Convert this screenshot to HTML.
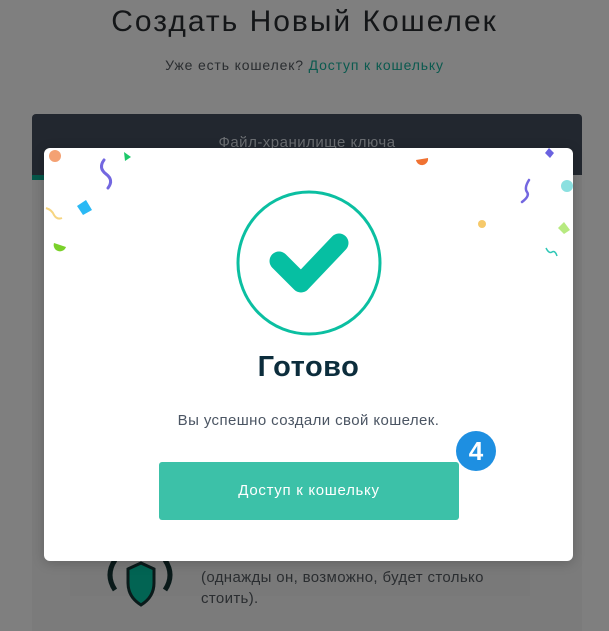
<!DOCTYPE html>
<html><head><meta charset="utf-8"><style>
*{margin:0;padding:0;box-sizing:border-box}
body{width:609px;height:631px;overflow:hidden;background:#7f7f7f;font-family:"Liberation Sans",sans-serif;position:relative}
.abs{position:absolute}
</style></head><body>
<div class="abs" style="left:32px;top:175px;width:550px;height:456px;background:#7b7b7b"></div>
<div class="abs" style="left:70px;top:200px;width:460px;height:396px;background:#797979"></div>
<div class="abs" style="left:0;top:5px;width:609px;text-align:center;font-size:30px;letter-spacing:2px;color:#141618">Создать Новый Кошелек</div>
<div class="abs" style="left:0;top:57px;width:609px;text-align:center;font-size:14px;letter-spacing:0.85px;color:#2a2d30">Уже есть кошелек? <span style="color:#0b5a4f">Доступ к кошельку</span></div>
<div class="abs" style="left:32px;top:114px;width:550px;height:61px;background:#22272f;border-radius:4px 4px 0 0"></div>
<div class="abs" style="left:32px;top:175px;width:200px;height:5px;background:#06574a"></div>
<div class="abs" style="left:32px;top:134px;width:550px;text-align:center;font-size:15px;letter-spacing:0.5px;color:#6b6e72">Файл-хранилище ключа</div>
<svg class="abs" style="left:95px;top:555px" width="90" height="70" viewBox="0 0 90 70">
<path d="M20 5 Q10 20 20 35" stroke="#0a1a1a" stroke-width="5" fill="none"/>
<path d="M70 5 Q80 20 70 35" stroke="#0a1a1a" stroke-width="5" fill="none"/>
<path d="M46 8 L33 14 L33 28 Q33 42 46 50 Q59 42 59 28 L59 14 Z" fill="#026453" stroke="#0a1a1a" stroke-width="3"/>
</svg>
<div class="abs" style="left:201px;top:567px;font-size:15px;line-height:21px;letter-spacing:0.35px;color:#2a2d30;width:310px">(однажды он, возможно, будет столько стоить).</div>

<div class="abs" style="left:44px;top:148px;width:529px;height:413px;background:#fff;border-radius:6px;box-shadow:0 2px 12px rgba(0,0,0,.2)"></div>
<svg class="abs" style="left:44px;top:148px" width="529" height="130">
<circle cx="11" cy="8" r="6" fill="#f4a173"/>
<path d="M60 12 Q54 20 62 26 Q70 32 64 40" stroke="#7367e0" stroke-width="3" fill="none" stroke-linecap="round"/>
<path d="M80 4 L87 9 L81 13Z" fill="#1dc86a"/>
<path d="M33 58 L42 52 L48 62 L39 67Z" fill="#2ab9f5"/>
<path d="M2 60 Q8 62 10 67 Q13 72 18 70" stroke="#f6d581" stroke-width="2" fill="none"/>
<path d="M10 95 A6 6 0 0 0 22 99 Z" fill="#7ad12a"/>
<path d="M372 12 A6 6 0 0 0 384 10 L372 12Z" fill="#f07232"/>
<path d="M505 0 L510 5 L506 10 L501 5Z" fill="#6a62e0"/>
<circle cx="523" cy="38" r="6" fill="#8be0e0"/>
<path d="M485 32 Q480 40 483 44 Q486 48 478 54" stroke="#7367e0" stroke-width="2.5" fill="none" stroke-linecap="round"/>
<circle cx="438" cy="76" r="4" fill="#f6c96a"/>
<path d="M514 80 L520 74 L526 82 L520 86Z" fill="#b7ea80"/>
<path d="M502 100 Q505 106 508 104 Q511 102 513 108" stroke="#2ec7b6" stroke-width="1.5" fill="none"/>
</svg>
<svg class="abs" style="left:235px;top:189px" width="148" height="148">
<circle cx="74" cy="74" r="71" fill="none" stroke="#0bbfa1" stroke-width="3"/>
<path d="M44 72 L66 94 L104 54" stroke="#06bfa2" stroke-width="19" fill="none" stroke-linecap="round" stroke-linejoin="round"/>
</svg>
<div class="abs" style="left:44px;top:351px;width:529px;text-align:center;font-size:29px;letter-spacing:0.5px;font-weight:bold;color:#0c2d3c">Готово</div>
<div class="abs" style="left:44px;top:412px;width:529px;text-align:center;font-size:15px;letter-spacing:0.4px;color:#4b5563">Вы успешно создали свой кошелек.</div>
<div class="abs" style="left:159px;top:462px;width:300px;height:58px;background:#3cc1a8;border-radius:3px;color:#fff;font-size:15px;letter-spacing:0.7px;text-align:center;line-height:58px">Доступ к кошельку</div>
<div class="abs" style="left:456px;top:431px;width:40px;height:40px;border-radius:50%;background:#1e8fe1;color:#fff;font-size:26px;font-weight:bold;text-align:center;line-height:40px">4</div>
</body></html>
